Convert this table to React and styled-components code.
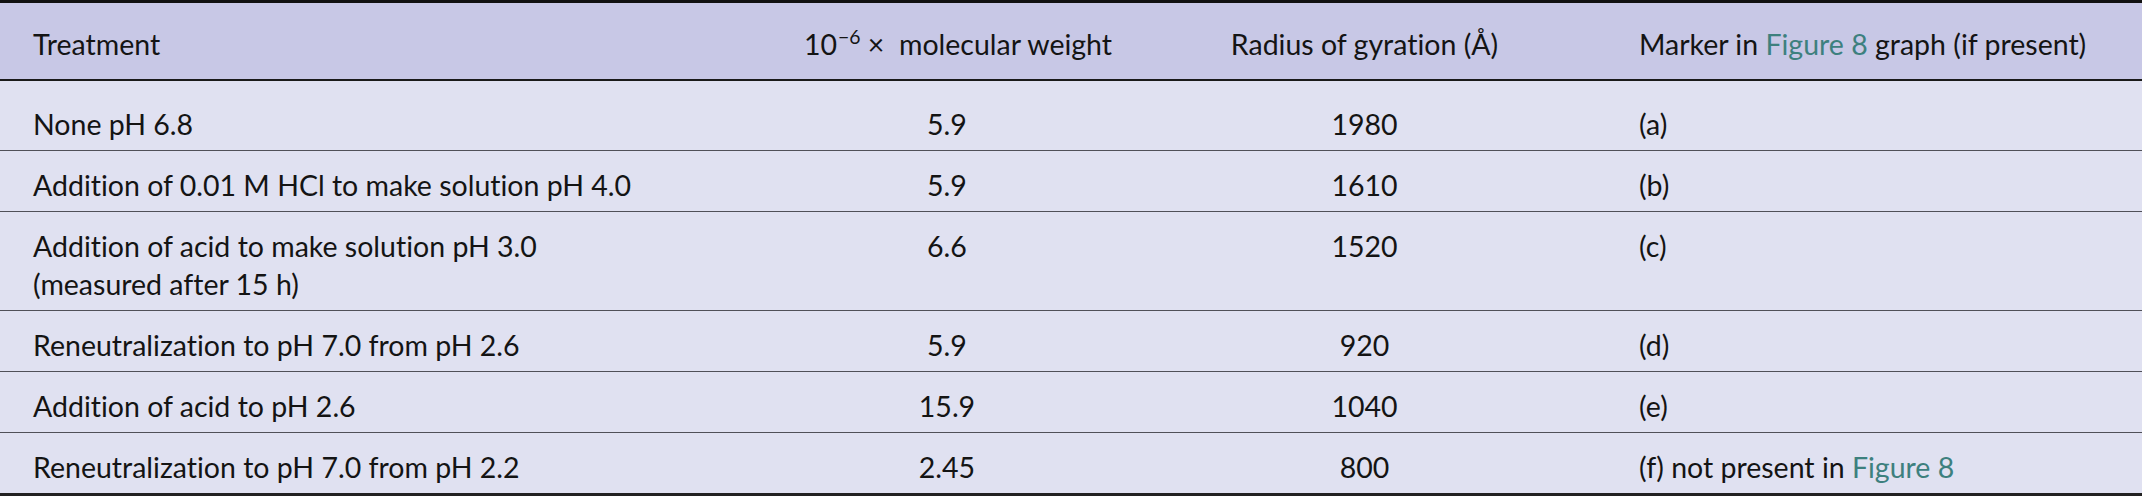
import React from "react";
import styled, { createGlobalStyle } from "styled-components";

const Global = createGlobalStyle`
  html, body { margin: 0; padding: 0; background: #ffffff; }
  body { font-family: Lato, "Noto Sans", sans-serif; color: #111; }
`;

const Table = styled.table`
  width: 2142px;
  border-collapse: collapse;
  table-layout: fixed;
  font-size: 28.5px;
  line-height: 38px;
  color: #141414;
  font-variant-ligatures: none;
  font-feature-settings: "liga" 0, "clig" 0;
  border-top: 3px solid #111;
  border-bottom: 3px solid #222;
`;

const HeadRow = styled.tr`
  background: #c8c8e6;
  border-bottom: 2px solid #1a1a1a;
`;

const Th = styled.th`
  font-weight: 400;
  text-align: ${(p) => p.$align || "left"};
  padding: 22px 33px 16px;
  white-space: nowrap;
`;

const Row = styled.tr`
  background: #e0e1f1;
  border-top: 1px solid #505058;
  &:first-child { border-top: none; }
`;

const Td = styled.td`
  text-align: ${(p) => p.$align || "left"};
  padding: ${(p) => (p.$first ? "24px" : "15px")} 33px 7px;
  vertical-align: top;
`;

const Sup = styled.sup`
  font-size: 0.68em;
  line-height: 0;
  vertical-align: 0.55em;
  margin-left: 1px;
`;

const Ref = styled.span`
  color: #3d807e;
`;

const rows = [
  ["None pH 6.8", "5.9", "1980", "(a)"],
  ["Addition of 0.01 M HCl to make solution pH 4.0", "5.9", "1610", "(b)"],
  [
    <>
      Addition of acid to make solution pH 3.0
      <br />
      (measured after 15 h)
    </>,
    "6.6",
    "1520",
    "(c)",
  ],
  ["Reneutralization to pH 7.0 from pH 2.6", "5.9", "920", "(d)"],
  ["Addition of acid to pH 2.6", "15.9", "1040", "(e)"],
  [
    "Reneutralization to pH 7.0 from pH 2.2",
    "2.45",
    "800",
    <>
      (f) not present in <Ref>Figure 8</Ref>
    </>,
  ],
];

export default function App() {
  return (
    <>
      <Global />
      <Table>
        <colgroup>
          <col style={{ width: 771 }} />
          <col style={{ width: 352 }} />
          <col style={{ width: 483 }} />
          <col style={{ width: 536 }} />
        </colgroup>
        <thead>
          <HeadRow>
            <Th>Treatment</Th>
            <Th $align="center">
              10<Sup>−6</Sup> ×&nbsp; molecular weight
            </Th>
            <Th $align="center">Radius of gyration (Å)</Th>
            <Th>
              Marker in <Ref>Figure 8</Ref> graph (if present)
            </Th>
          </HeadRow>
        </thead>
        <tbody>
          {rows.map((r, i) => (
            <Row key={i}>
              <Td $first={i === 0}>{r[0]}</Td>
              <Td $first={i === 0} $align="center">{r[1]}</Td>
              <Td $first={i === 0} $align="center">{r[2]}</Td>
              <Td $first={i === 0}>{r[3]}</Td>
            </Row>
          ))}
        </tbody>
      </Table>
    </>
  );
}
